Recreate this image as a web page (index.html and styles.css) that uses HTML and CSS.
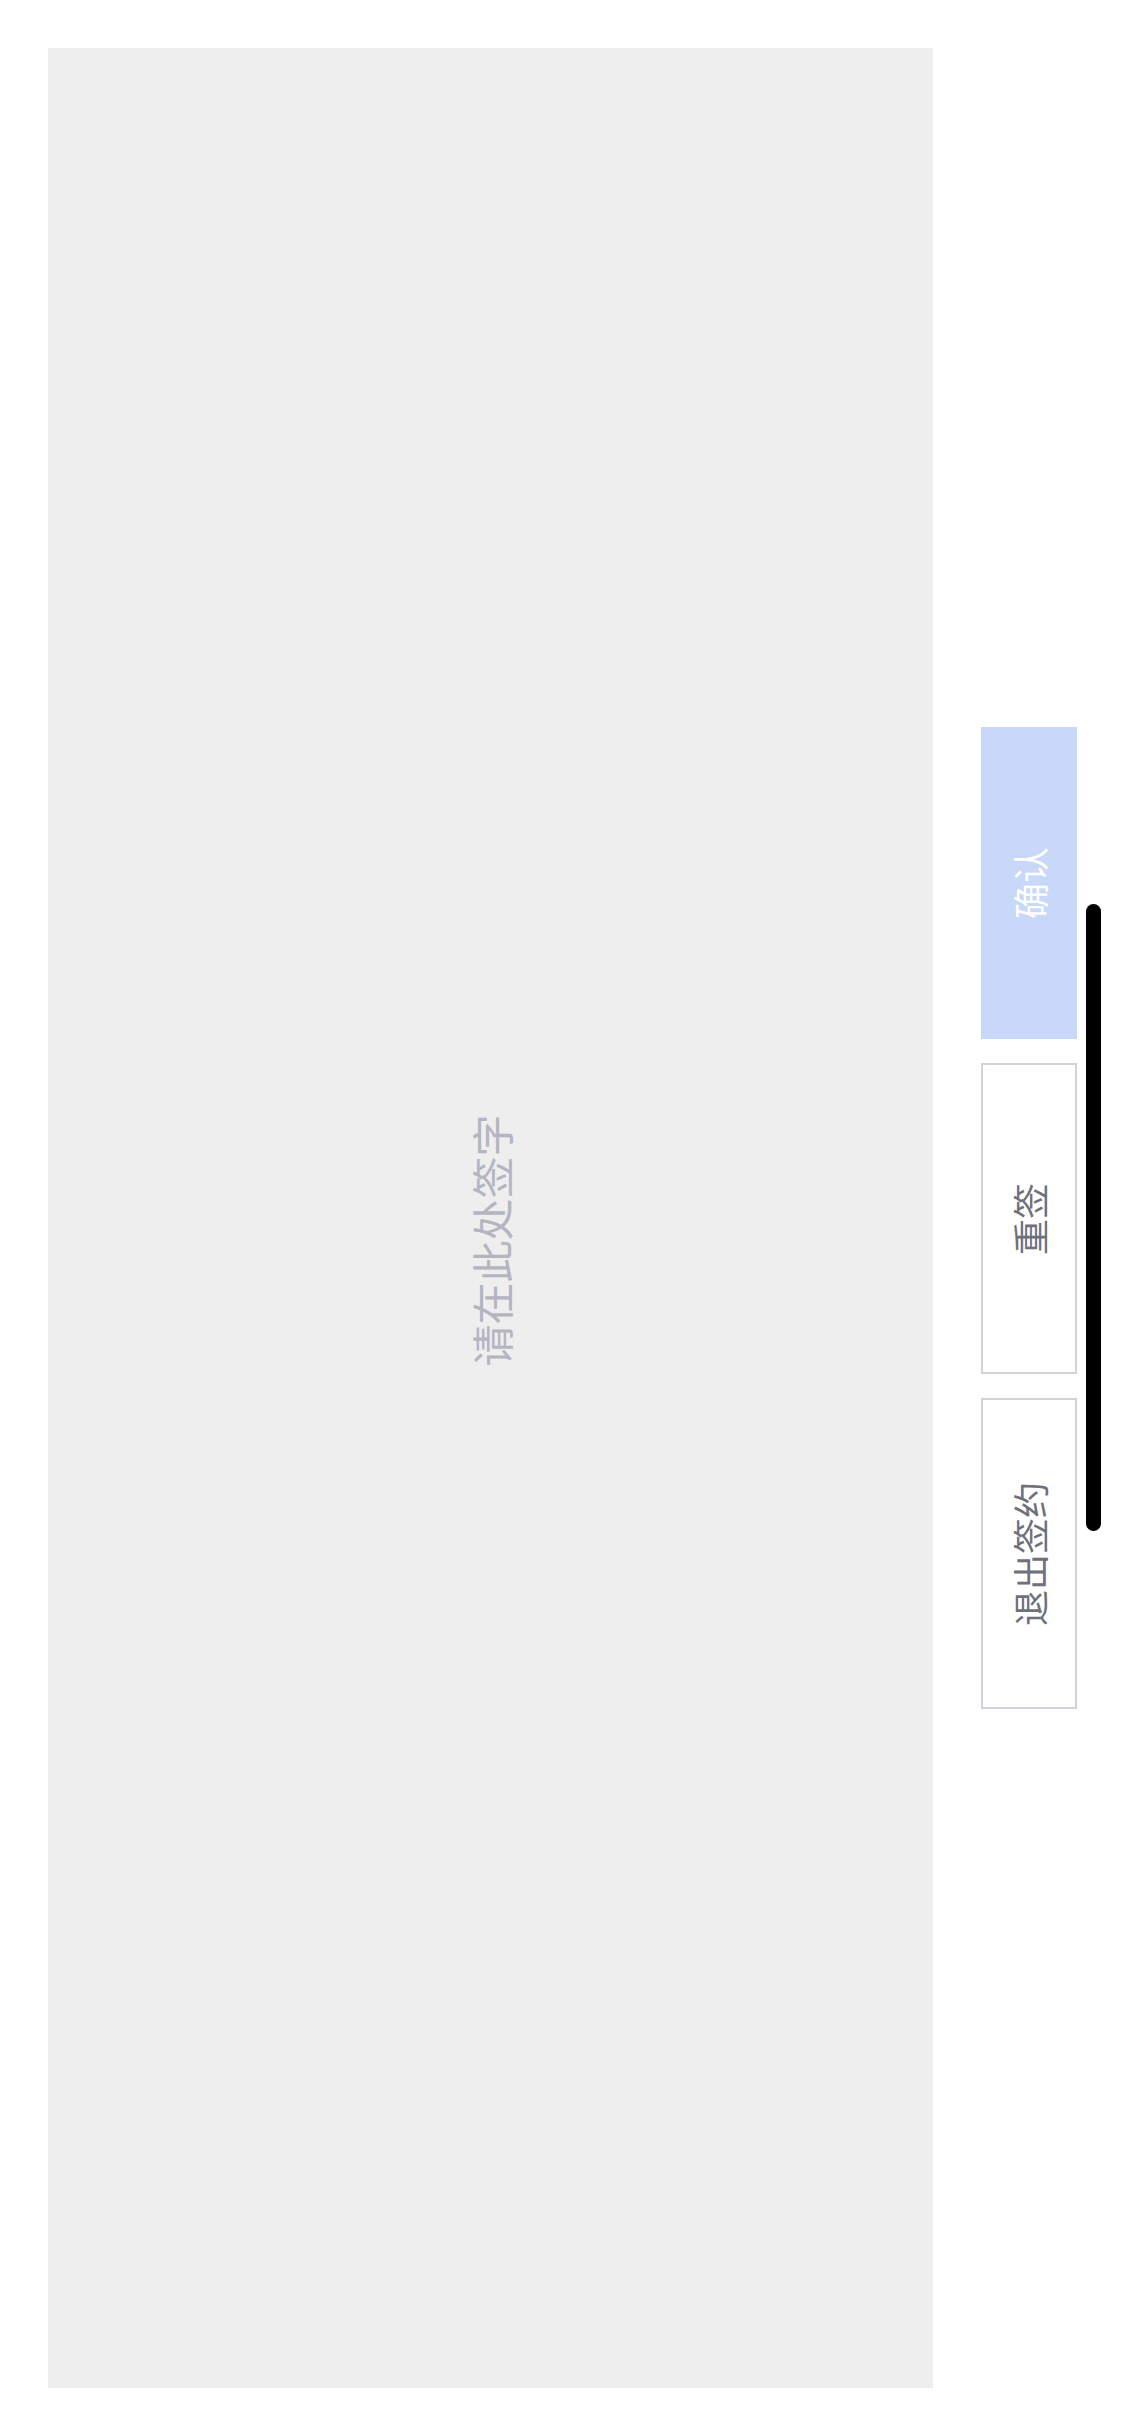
FILE: index.html
```html
<!DOCTYPE html>
<html lang="zh-CN">
<head>
    <meta charset="UTF-8">
    <meta name="viewport" content="width=device-width, initial-scale=1.0">
    <title>签字</title>
    <link rel="stylesheet" href="styles.css">
</head>
<body>

    <div class="page">
        <!-- 签字区域 -->
        <div class="sign-board">
            <span class="sign-tip">请在此处签字</span>
        </div>

        <!-- 右侧按钮 -->
        <div class="actions">
            <button class="btn btn-primary"><span>确认</span></button>
            <button class="btn"><span>重签</span></button>
            <button class="btn"><span>退出签约</span></button>
        </div>
    </div>

    <div class="home-bar"></div>

</body>
</html>
```

FILE: styles.css
```css
html, body {
    margin: 0;
    padding: 0;
    height: 100%;
    background-color: #fff;
    font-family: "Noto Sans CJK SC", "Noto Sans", sans-serif;
}

.page {
    display: flex;
    align-items: center;
    box-sizing: border-box;
    height: 2436px;
    padding: 48px;
    gap: 48px;
}

.sign-board {
    width: 885px;
    height: 100%;
    background-color: #eeeeee;
    display: flex;
    align-items: center;
    justify-content: center;
}

.sign-tip {
    font-size: 42px;
    color: #b3b5c1;
    white-space: nowrap;
    transform: rotate(-90deg) translateX(-22px);
}

.actions {
    display: flex;
    flex-direction: column;
    gap: 24px;
}

.btn {
    width: 96px;
    height: 311px;
    box-sizing: border-box;
    border: 2px solid #d2d3db;
    background-color: #fff;
    padding: 0;
    display: flex;
    align-items: center;
    justify-content: center;
    font-family: inherit;
    cursor: pointer;
}

.btn span {
    display: block;
    font-size: 36px;
    color: #6e707b;
    white-space: nowrap;
    transform: rotate(-90deg);
}

.btn-primary {
    height: 312px;
    border: none;
    background-color: #c7d8f9;
}

.btn-primary span {
    color: #fff;
}

.home-bar {
    position: absolute;
    left: 1086px;
    top: 904px;
    width: 15px;
    height: 627px;
    border-radius: 8px;
    background-color: #000;
}
```
